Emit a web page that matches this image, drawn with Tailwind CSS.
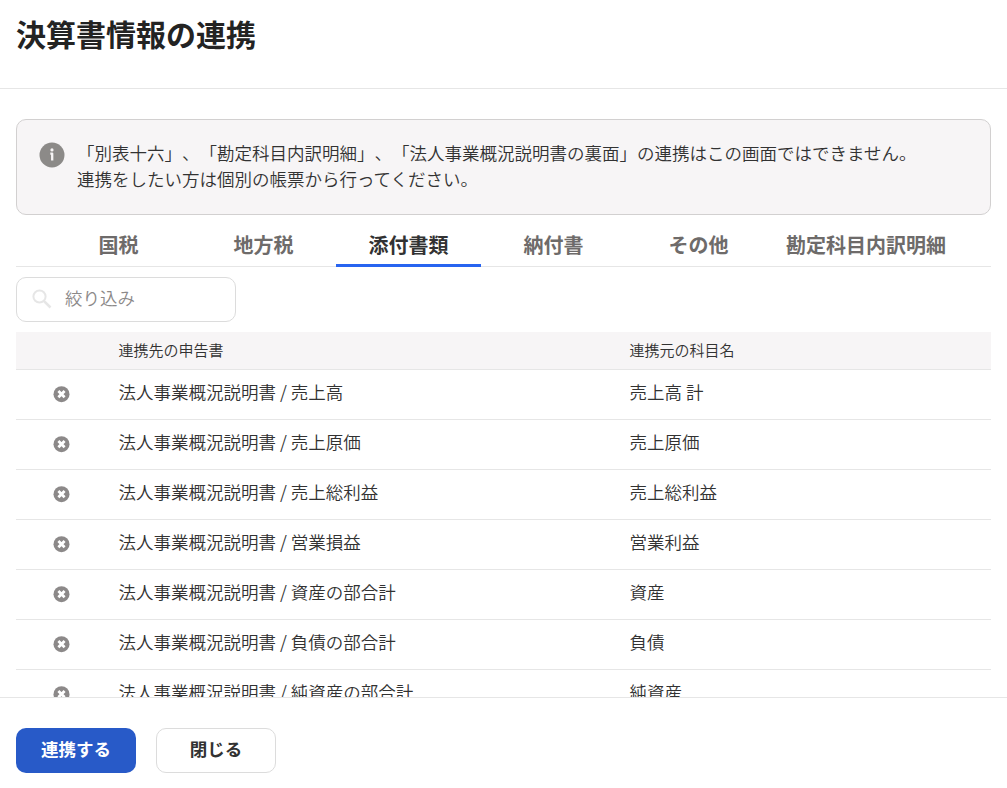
<!DOCTYPE html>
<html lang="ja">
<head>
<meta charset="utf-8">
<title>決算書情報の連携</title>
<script src="https://cdn.jsdelivr.net/npm/@tailwindcss/browser@4"></script>
</head>
<body class="flex h-[788px] w-[1007px] flex-col overflow-hidden bg-white font-['Noto_Sans_CJK_JP',sans-serif] text-[17.5px] font-[350] text-[#323232] [text-spacing-trim:space-all]">
<header class="h-[89px] shrink-0 border-b border-[#e6e6e6] px-4 pt-[12px]">
  <h1 class="text-[30px] leading-[42px] font-bold text-[#232323]">決算書情報の連携</h1>
</header>
<main class="flex h-[608px] shrink-0 flex-col overflow-hidden px-4 pt-[30px]">
  <section class="flex h-24 shrink-0 rounded-[10px] border border-[#d2d0d0] bg-[#f7f5f6] pt-[20px] pl-[22px]">
    <svg class="mt-[2px] mr-[12px] size-[26px] shrink-0" viewBox="0 0 26 26"><circle cx="13" cy="13" r="12.5" fill="#8c8a88"/><circle cx="13" cy="7.9" r="1.6" fill="#f7f5f6"/><path d="M11.3 11.6h1.9v7" fill="none" stroke="#f7f5f6" stroke-width="2.3" stroke-linejoin="round"/></svg>
    <p class="leading-[26px] whitespace-nowrap">「別表十六」、「勘定科目内訳明細」、「法人事業概況説明書の裏面」の連携はこの画面ではできません。<br>連携をしたい方は個別の帳票から行ってください。</p>
  </section>
  <nav class="mt-2 flex h-11 shrink-0 border-b border-[#e6e6e6] pl-[30px] text-[20px] leading-[44px] font-bold text-[#6e6b6a]">
    <div class="w-[145px] text-center">国税</div>
    <div class="w-[145px] text-center">地方税</div>
    <div class="h-11 w-[145px] border-b-3 border-[#2864f0] text-center text-[#323232]">添付書類</div>
    <div class="w-[145px] text-center">納付書</div>
    <div class="w-[145px] text-center">その他</div>
    <div class="w-[190px] text-center">勘定科目内訳明細</div>
  </nav>
  <label class="mt-[10px] flex h-[45px] w-[220px] shrink-0 rounded-[10px] border border-[#dcdcdc] pl-[15px] text-[#8c8989]">
    <svg class="mt-[11px] mr-[13px] size-5 shrink-0" viewBox="0 0 20 20" fill="none" stroke="#e6e6e6" stroke-width="2"><circle cx="7.5" cy="7.5" r="6.1"/><path d="m11.8 11.8 6.7 6.7" stroke-width="2.5"/></svg>
    <span class="leading-[40px]">絞り込み</span>
  </label>
  <table class="mt-[10px] w-[975px] shrink-0 table-fixed border-collapse text-left leading-[26px]">
    <colgroup><col class="w-[102.5px]"><col class="w-[511px]"><col></colgroup>
    <thead><tr class="h-[37px] border-b border-[#e6e6e6] bg-[#f7f5f6] text-[15px]"><th></th><th class="font-[350]">連携先の申告書</th><th class="font-[350]">連携元の科目名</th></tr></thead>
    <tbody id="rows"></tbody>
  </table>
</main>
<footer class="flex h-[91px] shrink-0 gap-5 border-t border-[#e6e6e6] px-4 pt-[30px] font-bold">
  <button class="h-[45px] w-[120px] rounded-[10px] bg-[#285ac8] pb-[3px] text-white">連携する</button>
  <button class="h-[45px] w-[120px] rounded-[10px] border border-[#dcdcdc] bg-white pb-[3px]">閉じる</button>
</footer>
<script>
const rows = [['売上高','売上高 計'],['売上原価','売上原価'],['売上総利益','売上総利益'],['営業損益','営業利益'],['資産の部合計','資産'],['負債の部合計','負債'],['純資産の部合計','純資産']];
document.getElementById('rows').innerHTML = rows.map(([a,b]) => `
<tr class="h-[50px] border-b border-[#e6e6e6]"><td class="pl-[37px]"><svg class="size-[17px]" viewBox="0 0 17 17"><circle cx="8.5" cy="8.2" r="8" fill="#8c8989"/><path d="m5.4 5.1 6.2 6.2m0-6.2-6.2 6.2" stroke="#fff" stroke-width="2.8"/></svg></td><td class="pb-[5px]">法人事業概況説明書 / ${a}</td><td class="pb-[5px]">${b}</td></tr>`).join('');
</script>
</body>
</html>
